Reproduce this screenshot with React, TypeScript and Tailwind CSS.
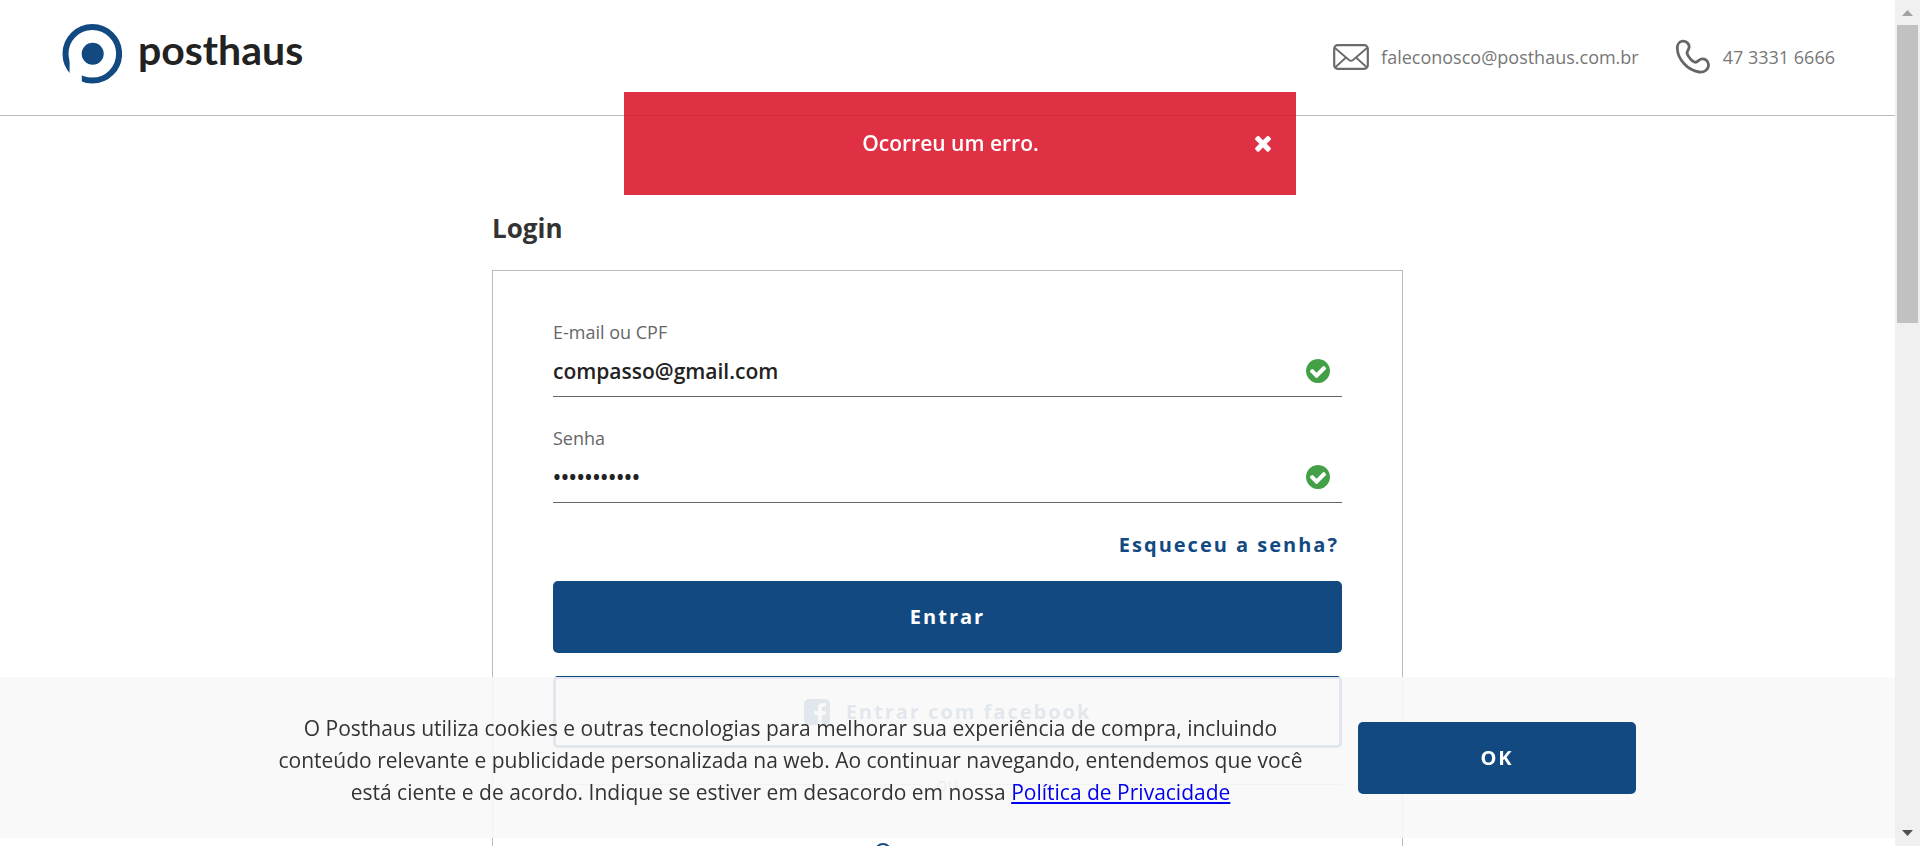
import React from "react";

const FONT = "font-['Open_Sans','Noto_Sans',sans-serif]";

function Logo() {
  return (
    <a href="#" aria-label="posthaus" className="flex items-start gap-4 text-[#222]">
      <svg className="h-[60px] w-[60px]" viewBox="0 0 60 60" aria-hidden="true">
        <circle cx="30.3" cy="29.8" r="26.8" fill="none" stroke="#134981" strokeWidth="6" />
        <path d="M7.6 27H19.8V60H7.6Z" fill="#fff" />
        <circle cx="30.7" cy="29.7" r="11" fill="#134981" />
      </svg>
      <span className="font-['Lato',sans-serif] text-[41px] font-bold leading-[52px]">posthaus</span>
    </a>
  );
}

function MailIcon() {
  return (
    <svg className="h-[26px] w-[36px]" viewBox="0 0 36 26" fill="none" stroke="#6a6a6a" strokeWidth="2.2" aria-hidden="true">
      <rect x="1.2" y="1.2" width="33.6" height="23.6" rx="3.5" />
      <path d="M2 4 16 16q2 1.6 4 0L34 4M2 23.5 13 13.5M34 23.5 23 13.5" strokeWidth="1.8" />
    </svg>
  );
}

function PhoneIcon() {
  return (
    <svg className="h-9 w-9" viewBox="0 0 36 36" fill="none" stroke="#666" strokeWidth="2.8" strokeLinejoin="round" aria-hidden="true">
      <path d="M7.5 2.2C4 2.6 2 5.800 2.300 10C3 20 12 31 24 33C29.500 33.800 34 30 33.500 25.500C33 21.500 29.500 19.300 26.300 20C23.500 20.700 22.700 23.200 20.500 23.300C17.500 23.200 12.500 17.500 12 14C11.900 12 14.200 10.500 14.200 7.800C14.200 4.500 11 1.800 7.500 2.200Z" />
    </svg>
  );
}

function CheckIcon() {
  return (
    <svg className="h-6 w-6 shrink-0" viewBox="128 128 1536 1536" fill="#43a047" aria-hidden="true">
      <path d="M1412 734q0-28-18-46l-91-90q-19-19-45-19t-45 19l-408 407-226-226q-19-19-45-19t-45 19l-91 90q-18 18-18 46 0 27 18 45l362 362q19 19 45 19 27 0 46-19l543-543q18-18 18-45zm252 162q0 209-103 385.5t-279.5 279.5-385.5 103-385.5-103-279.5-279.5-103-385.5 103-385.5 279.5-279.5 385.5-103 385.5 103 279.5 279.5 103 385.5z" />
    </svg>
  );
}

function CloseIcon() {
  return (
    <svg className="h-6 w-6" viewBox="0 0 1792 1792" fill="currentColor" aria-hidden="true">
      <path d="M1490 1322q0 40-28 68l-136 136q-28 28-68 28t-68-28l-294-294-294 294q-28 28-68 28t-68-28l-136-136q-28-28-28-68t28-68l294-294-294-294q-28-28-28-68t28-68l136-136q28-28 68-28t68 28l294 294 294-294q28-28 68-28t68 28l136 136q28 28 28 68t-28 68l-294 294 294 294q28 28 28 68z" />
    </svg>
  );
}

function FacebookIcon() {
  return (
    <svg className="h-[26px] w-[26px]" viewBox="128 128 1536 1536" fill="currentColor" aria-hidden="true">
      <path d="M1376 128q119 0 203.5 84.5t84.5 203.5v960q0 119-84.5 203.5t-203.5 84.5h-188v-595h199l30-232h-229v-148q0-56 23.5-84t91.5-28l122-1v-207q-63-9-178-9-136 0-217.5 80t-81.5 226v171h-200v232h200v595h-532q-119 0-203.5-84.5t-84.5-203.5v-960q0-119 84.5-203.5t203.5-84.5h960z" />
    </svg>
  );
}

type FieldProps = { id: string; label: string; type: string; value: string };

function Field({ id, label, type, value }: FieldProps) {
  return (
    <div className="mb-7 border-b border-[#666]">
      <label htmlFor={id} className="block text-[18px] font-normal leading-[26px] text-[#666]">
        {label}
      </label>
      <div className="flex h-[51px] items-center pr-3">
        <input
          id={id}
          type={type}
          defaultValue={value}
          className="min-w-0 flex-1 bg-transparent text-[21px] font-semibold leading-7 text-[#222] outline-none"
        />
        <CheckIcon />
      </div>
    </div>
  );
}

function Scrollbar() {
  return (
    <div className="flex w-[25px] shrink-0 flex-col items-center bg-[#f0f0f0]" aria-hidden="true">
      <svg className="h-[25px] w-[25px] shrink-0" viewBox="0 0 25 25">
        <path d="M12.5 10 18 16H7Z" fill="#a3a3a3" />
      </svg>
      <div className="h-[298px] w-[21px] bg-[#c1c1c1]" />
      <svg className="mt-auto h-[25px] w-[25px] shrink-0" viewBox="0 0 25 25">
        <path d="M12.5 15 18 9H7Z" fill="#505050" />
      </svg>
    </div>
  );
}

export default function App() {
  return (
    <div className={`flex h-screen overflow-hidden bg-white ${FONT}`}>
      <div className="min-w-0 flex-1 overflow-hidden">
        <header className="flex h-[116px] items-start justify-between border-b border-[#bbb] pl-[62px] pr-[60px] pt-6">
          <Logo />
          <address className="flex items-center gap-9 pt-[15px] text-[18px] font-normal not-italic leading-6 text-[#777]">
            <a href="mailto:faleconosco@posthaus.com.br" className="flex h-9 items-center gap-3">
              <MailIcon />
              faleconosco@posthaus.com.br
            </a>
            <a href="tel:4733316666" className="flex h-9 items-center gap-3">
              <PhoneIcon />
              47 3331 6666
            </a>
          </address>
        </header>

        <main className="mx-auto max-w-[911px] pt-[95px]">
          <h1 className="mb-[25px] text-[26px] font-bold leading-[34px] text-[#333]">Login</h1>
          <form className="border border-[#bbb] px-[60px] pb-16 pt-12" onSubmit={(e) => e.preventDefault()}>
            <Field id="email" label="E-mail ou CPF" type="text" value="compasso@gmail.com" />
            <Field id="senha" label="Senha" type="password" value="compasso123" />
            <a href="#" className="mb-[22px] block pr-[3px] text-right text-[20px] font-bold leading-7 tracking-[2px] text-[#134981]">
              Esqueceu a senha?
            </a>
            <button type="submit" className="h-[72px] w-full rounded-[5px] bg-[#134981] text-[20px] font-bold tracking-[2px] text-white">
              Entrar
            </button>
            <button
              type="button"
              className="mt-[23px] flex h-[72px] w-full items-center justify-center gap-4 rounded-[5px] border-3 border-[#134981] text-[20px] font-bold tracking-[2px] text-[#134981]"
            >
              <FacebookIcon />
              Entrar com facebook
            </button>
            <div className="mt-[22px] flex items-center gap-4 text-[18px] font-normal leading-7 text-[#777]">
              <span className="h-px flex-1 bg-[#bbb]" />
              ou
              <span className="h-px flex-1 bg-[#bbb]" />
            </div>
            <div className="mt-[45px] flex justify-center pr-[130px] text-[#134981]">
              <svg className="h-8 w-4" viewBox="0 0 16 32" fill="none" stroke="currentColor" strokeWidth="2" aria-hidden="true">
                <circle cx="8" cy="8" r="7" />
              </svg>
            </div>
          </form>
        </main>
      </div>

      <Scrollbar />

      <div role="alert" className="fixed left-[32.5%] top-[92px] flex h-[103px] w-[35%] items-start bg-[#dd1a2f]/90 pl-[26px] pr-[21px] pt-9 text-white">
        <p className="flex-1 text-center text-[21px] font-semibold leading-[30px]">Ocorreu um erro.</p>
        <button type="button" aria-label="Fechar" className="flex h-[30px] items-center">
          <CloseIcon />
        </button>
      </div>

      <aside className="fixed bottom-2 left-0 right-[25px] flex h-[161px] items-center justify-center gap-9 bg-[#f8f8f8]/90">
        <p className="w-[1063px] px-4 pt-1 text-center text-[21px] font-normal leading-8 text-[#333]">
          O Posthaus utiliza cookies e outras tecnologias para melhorar sua experiência de compra, incluindo conteúdo
          relevante e publicidade personalizada na web. Ao continuar navegando, entendemos que você está ciente e de
          acordo. Indique se estiver em desacordo em nossa{" "}
          <a href="#" className="text-[#0000ee] underline">
            Política de Privacidade
          </a>
        </p>
        <button type="button" className="h-[72px] w-[278px] rounded-[5px] bg-[#134981] text-[20px] font-bold tracking-[2px] text-white">
          OK
        </button>
      </aside>
    </div>
  );
}
